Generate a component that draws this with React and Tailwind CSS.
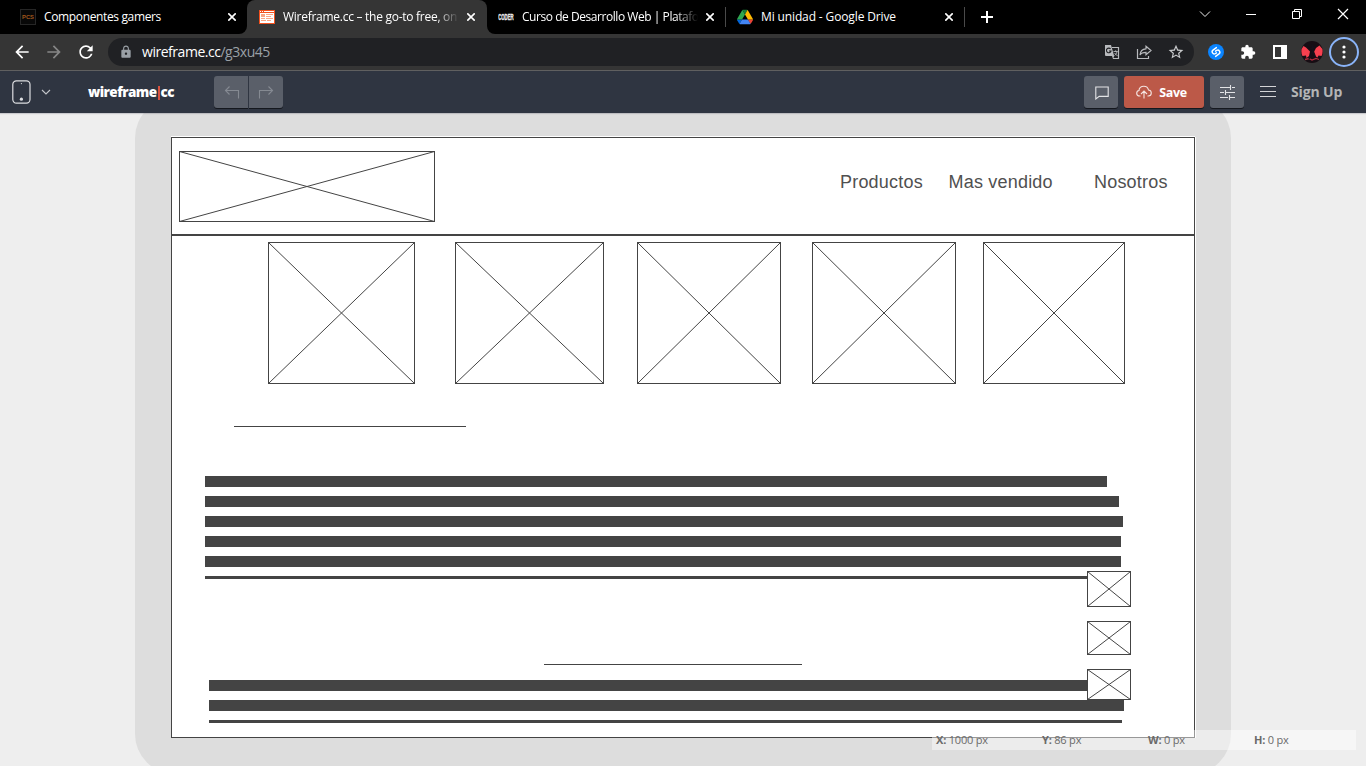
import React from "react";
import { MdStarBorder, MdExtension, MdLock, MdRefresh, MdArrowBack, MdArrowForward } from "react-icons/md";

const TEXT_FONT = "font-['Open_Sans','Noto_Sans',sans-serif]";

function Cross({ className = "" }) {
  return (
    <svg className={`h-2 w-2 shrink-0 ${className}`} viewBox="0 0 8 8" stroke="#fff" strokeWidth="1.6">
      <path d="M.3 .3 7.7 7.7M7.7 .3 .3 7.7" />
    </svg>
  );
}

function Tab({ icon, title, fade, spacing, className = "" }) {
  return (
    <div className={`flex h-[34px] w-[239px] shrink-0 items-center pl-3 ${className}`}>
      <div className="h-4 w-4 shrink-0">{icon}</div>
      <div
        className={`ml-2 w-[176px] overflow-hidden whitespace-nowrap text-[12px] leading-[18px] text-white ${spacing} ${
          fade ? "[mask-image:linear-gradient(to_right,#000_87%,transparent)]" : ""
        }`}
      >
        {title}
      </div>
      <Cross className="ml-2" />
    </div>
  );
}

const PcsIcon = () => (
  <svg viewBox="0 0 16 16" className="h-4 w-4">
    <rect x=".5" y=".5" width="15" height="15" fill="#080808" stroke="#262626" />
    <text x="8" y="10.2" textAnchor="middle" textLength="12" lengthAdjust="spacingAndGlyphs" fontSize="6" fontWeight="700" fontFamily="Liberation Sans, sans-serif" fill="#a0561c">PCS</text>
  </svg>
);

const WireIcon = () => (
  <svg viewBox="0 0 16 16" className="h-4 w-4" shapeRendering="crispEdges">
    <rect y="1" width="16" height="14" fill="#f4511e" />
    <path d="M1 2.5h1M3 2.5h1M5 2.5h10" stroke="#fff" />
    <rect x="1" y="4" width="14" height="10" fill="#fff" />
    <rect x="2" y="5" width="4" height="3" fill="#f9a585" />
    <path d="M7 5.5h7M7 7.5h5M2 9.5h4M7 9.5h7M2 11.5h5M8 11.5h4" stroke="#f9a585" />
  </svg>
);

const CoderIcon = () => (
  <svg viewBox="0 0 16 16" className="h-4 w-4">
    <text transform="scale(1 2)" x="0.2" y="5.5" textLength="15.4" lengthAdjust="spacingAndGlyphs" fontSize="4.6" fontWeight="700" fontFamily="Liberation Sans, sans-serif" fill="#e8e8e8" stroke="#e8e8e8" strokeWidth=".2">CODER</text>
  </svg>
);

const DriveIcon = () => (
  <svg viewBox="0 0 87.3 78" className="h-4 w-4">
    <path d="m6.6 66.85 3.85 6.65c.8 1.4 1.95 2.5 3.3 3.3l13.75-23.8h-27.5c0 1.55.4 3.1 1.2 4.5z" fill="#0066da" />
    <path d="m43.65 25-13.75-23.8c-1.35.8-2.5 1.9-3.3 3.3l-25.4 44a9.06 9.06 0 0 0-1.2 4.5h27.5z" fill="#2fa84f" />
    <path d="m73.55 76.8c1.35-.8 2.5-1.9 3.3-3.3l9.25-16c.8-1.4 1.2-2.95 1.2-4.5h-27.5l5.85 11.5z" fill="#ea4335" />
    <path d="m43.65 25 13.75-23.8c-1.35-.8-2.9-1.2-4.5-1.2h-18.5c-1.6 0-3.15.45-4.5 1.2z" fill="#188038" />
    <path d="m59.8 53h-32.3l-13.75 23.8c1.35.8 2.9 1.2 4.5 1.2h50.8c1.6 0 3.15-.45 4.5-1.2z" fill="#4285f4" />
    <path d="m73.4 26.5-12.7-22c-.8-1.4-1.95-2.5-3.3-3.3l-13.75 23.8 16.15 28h27.45c0-1.55-.4-3.1-1.2-4.5z" fill="#ffba00" />
  </svg>
);

function TabStrip() {
  return (
    <div className="flex h-[34px] bg-[#353535]">
      <div className="w-[247px] shrink-0 rounded-br-lg bg-black pl-2">
        <Tab icon={<PcsIcon />} title="Componentes gamers" spacing="tracking-[-0.36px]" />
      </div>
      <div className="w-60 shrink-0 bg-[linear-gradient(#000_50%,transparent_50%)]">
        <Tab icon={<WireIcon />} title="Wireframe.cc – the go-to free, on" fade spacing="tracking-[-0.27px]" className="w-[240px] rounded-t-lg bg-[#353535]" />
      </div>
      <div className="flex flex-1 items-center rounded-bl-lg bg-black">
        <Tab icon={<CoderIcon />} title="Curso de Desarrollo Web | Platafo" fade spacing="tracking-[-0.45px]" className="-ml-px" />
        <div className="h-5 w-px bg-[#4a4a4a]" />
        <Tab icon={<DriveIcon />} title="Mi unidad - Google Drive" spacing="tracking-[-0.13px]" className="-ml-px" />
        <div className="h-5 w-px bg-[#4a4a4a]" />
        <svg className="ml-4 h-3 w-3" viewBox="0 0 12 12" stroke="#fff" strokeWidth="2"><path d="M6 0v12M0 6h12" /></svg>
        <div className="mr-[17px] ml-auto flex items-center gap-[34px] self-start pt-2">
          <svg className="h-3 w-3" viewBox="0 0 12 12" fill="none" stroke="#eee"><path d="m1 3.5 5 5 5-5" /></svg>
          <svg className="h-3 w-3" viewBox="0 0 12 12" stroke="#fff"><path d="M1 6.5h10" /></svg>
          <svg className="h-3 w-3" viewBox="0 0 12 12" fill="none" stroke="#fff"><path d="M1.5 3.5h7v7h-7zM3.5 3.5v-2h7v7h-2" /></svg>
          <svg className="h-3 w-3" viewBox="0 0 12 12" fill="none" stroke="#fff" strokeWidth="1.2"><path d="m1 1 10 10M11 1 1 11" /></svg>
        </div>
      </div>
    </div>
  );
}

function AddressBar() {
  return (
    <div className="flex h-[37px] items-center border-b border-[#606060] bg-[#353535] pl-3">
      <MdArrowBack className="h-5 w-5 text-white" />
      <MdArrowForward className="ml-3 h-5 w-5 text-[#868686]" />
      <MdRefresh className="ml-3 h-5 w-5 text-white" />
      <div className="ml-3 flex h-7 w-[1086px] items-center rounded-full bg-[#202124] pr-[10px] pl-[11px]">
        <MdLock className="h-[14px] w-[14px] text-[#9aa0a6]" />
        <div className="ml-[9px] text-[14px] leading-5 tracking-[-0.47px] text-white">
          wireframe.cc<span className="text-[#9aa0a6]">/g3xu45</span>
        </div>
        <div className="ml-auto flex items-center gap-4">
          <svg className="h-4 w-4" viewBox="0 0 16 16" fill="none">
            <path d="M8 3.5h6.5v11H9" stroke="#b8babd" strokeWidth="1.2" />
            <path d="M1 1h6l3.2 11H2a1 1 0 0 1-1-1zM8 12h2.2L9 15z" fill="#b8babd" />
            <path d="M6.6 5A2.3 2.3 0 1 0 7 7H5" stroke="#202124" strokeWidth="1.1" />
            <path d="M9.5 7.5h4.2M11.7 6.3v1.2M13 7.5c-.4 2-1.2 3-2.5 4M10.5 9l3 3" stroke="#b8babd" strokeWidth=".9" />
          </svg>
          <svg className="h-4 w-4" viewBox="0 0 16 16" fill="none" stroke="#b8babd" strokeWidth="1.2">
            <path d="M1.5 5v9.5h11V12" />
            <path d="M10 2.2 15 6.5l-5 4.2V8.3C7 8.3 5.2 9 4 11c.3-3.7 2.4-6 6-6.2z" />
          </svg>
          <MdStarBorder className="h-4 w-4 scale-110 text-[#c8cacc]" />
        </div>
      </div>
      <svg className="ml-[14px] h-4 w-4" viewBox="0 0 16 16" fill="none">
        <circle cx="8" cy="8" r="8" fill="#0a84ff" />
        <path d="M8.4 3.6 5 6.1a2.1 2.1 0 0 0 2.3 3.5l1.2-.8M7.6 12.4l3.4-2.5a2.1 2.1 0 0 0-2.3-3.5l-1.2.8" stroke="#fff" strokeWidth="1.4" strokeLinecap="round" />
      </svg>
      <MdExtension className="ml-4 h-4 w-4 text-white" />
      <svg className="ml-4 h-4 w-4" viewBox="0 0 16 16"><path fill="#fff" fillRule="evenodd" d="M1 1h14v14H1zM3 3v10h6V3z" /></svg>
      <svg className="ml-[13px] h-[22px] w-[22px]" viewBox="0 0 22 22">
        <circle cx="11" cy="11" r="11" fill="#170d14" />
        <path d="M.6 8 2.5 5 5 6.5l4 4L8 15l-2.5 2L5 14.5l-3.5.5A11 11 0 0 1 .6 8zM21.4 8 18.5 4.5 15 7l-2 4 1 4 2.5 1.5 1-2 3 .5A11 11 0 0 0 21.4 8z" fill="#f8404f" />
        <path d="m4 18.5 4-1 3 1.5 4-1.5 3 1" fill="none" stroke="#b02c3e" strokeWidth="1.3" />
        <path d="M11 3.5 12 9l-1.5 4L8 18M12 10l2.5 6M9 8l5-2" fill="none" stroke="#15101a" strokeWidth="1.5" />
      </svg>
      <div className="ml-[6px] flex h-[30px] w-[30px] items-center justify-center rounded-full border-2 border-[#8ab4f8]">
        <svg className="h-[14px] w-1" viewBox="0 0 4 14" fill="#fff"><circle cx="2" cy="2" r="1.6" /><circle cx="2" cy="7" r="1.6" /><circle cx="2" cy="12" r="1.6" /></svg>
      </div>
    </div>
  );
}

function ToolButton({ className, children }) {
  return <div className={`flex h-8 items-center justify-center shadow-[0_1px_0_#15181e] ${className}`}>{children}</div>;
}

function AppToolbar() {
  return (
    <div className="relative z-10 flex h-[42px] items-center bg-[#2f3541] pl-3 shadow-[0_1px_1px_rgba(60,60,80,0.2)]">
      <svg className="h-6 w-[19px]" viewBox="0 0 19 24" fill="none" stroke="#dcdde0" strokeWidth="1.2">
        <rect x=".8" y=".8" width="17.2" height="22.4" rx="3.6" />
        <circle cx="9.4" cy="19.2" r="1.6" fill="#dcdde0" stroke="none" />
        <circle cx="9.4" cy="3.6" r=".6" fill="#dcdde0" stroke="none" />
      </svg>
      <svg className="ml-[10px] h-2 w-[10px]" viewBox="0 0 10 8" fill="none" stroke="#c3c5c9" strokeWidth="1.1"><path d="m1 2 4 4 4-4" /></svg>
      <div className="ml-[37px] w-[126px] whitespace-nowrap text-[13.5px] leading-5 font-extrabold tracking-[-0.55px] text-white">
        wireframe<span className="mx-[1px] inline-block h-[14px] w-[2px] bg-[#d8523f] align-[-3px]" />cc
      </div>
      <ToolButton className="w-[34px] rounded-l-[3px] bg-[#5a5f69]">
        <svg className="mt-px ml-px h-4 w-4" viewBox="0 0 16 16" fill="none" stroke="#858a92" strokeWidth="1.1"><path d="M5.5 1.5 1.5 5.5l4 4M1.5 5.5h13v8" /></svg>
      </ToolButton>
      <ToolButton className="ml-px w-[34px] rounded-r-[3px] bg-[#5a5f69]">
        <svg className="mt-px mr-px h-4 w-4" viewBox="0 0 16 16" fill="none" stroke="#858a92" strokeWidth="1.1"><path d="m10.5 1.5 4 4-4 4M14.5 5.5h-13v8" /></svg>
      </ToolButton>
      <div className="ml-auto flex items-center gap-[6px]">
        <ToolButton className="w-[34px] rounded-[3px] bg-[#5a5f69]">
          <svg className="mt-px ml-px h-[14px] w-[14px]" viewBox="0 0 14 14" fill="none" stroke="#e3e4e6" strokeWidth="1.1"><path d="M.8 1h12.4v9.4H4.2L.8 13z" /></svg>
        </ToolButton>
        <ToolButton className="w-20 rounded-[3px] bg-[#bc5948]">
          <svg className="-ml-[5px] h-4 w-4" viewBox="0 0 16 16" fill="none" stroke="#f4e4e1" strokeWidth="1.1">
            <path d="M4.5 12H3.8C1.8 12 .7 10.7.7 9.2c0-1.4 1-2.5 2.3-2.7C3 3.8 5 2.2 7.8 2.2c2.7 0 4.3 1.6 4.7 3.8 1.8.2 2.8 1.5 2.8 3s-1.2 3-3 3h-.8M8 14.5V7M5 10l3-3 3 3" />
          </svg>
          <span className="mt-px ml-[7px] text-[12.5px] leading-4 font-bold tracking-[-0.35px] text-white">Save</span>
        </ToolButton>
        <ToolButton className="w-[34px] rounded-[3px] bg-[#5a5f69]">
          <svg className="mt-px ml-px h-[15px] w-[15px]" viewBox="0 0 15 15" fill="none" stroke="#e3e4e6" strokeWidth="1.1"><path d="M0 2.5h10M12 2.5h3M10.5 0v5M0 7.5h4M6 7.5h9M5.5 5v5M0 12.5h8M10 12.5h5M9.5 10v5" /></svg>
        </ToolButton>
      </div>
      <svg className="ml-4 h-3 w-[16px]" viewBox="0 0 16 12" stroke="#d3d4d6" strokeWidth="1.2"><path d="M0 .5h16M0 5.5h16M0 10.5h16" /></svg>
      <div className="mr-[22px] ml-[15px] w-[53px] whitespace-nowrap text-[14px] leading-5 font-bold tracking-[-0.15px] text-[#b4b5b6]">Sign Up</div>
    </div>
  );
}

function Placeholder({ w, h, className = "" }) {
  return (
    <svg width={w} height={h} viewBox={`0 0 ${w} ${h}`} className={`shrink-0 ${className}`} stroke="#444">
      <rect x=".5" y=".5" width={w - 1} height={h - 1} fill="#fff" />
      <path d={`M.5 .5 ${w - 0.5} ${h - 0.5}M${w - 0.5} .5 .5 ${h - 0.5}`} />
    </svg>
  );
}

function Bars({ className, children }) {
  return <div className={`flex flex-col gap-[9px] ${className}`}>{children}</div>;
}

function Wireframe() {
  return (
    <div className="relative h-[601px] w-[1024px] border border-[#444] bg-white shadow-[0_-1px_0_#fff,1px_0_0_#fff]">
      <header className="flex h-[98px] border-b-2 border-[#444] pt-[13px] pl-[7px] font-['Liberation_Sans',sans-serif] text-[18px] leading-[26px] text-[#505050]">
        <Placeholder w={256} h={71} />
        <nav className="ml-[405px] flex pt-[18px] whitespace-nowrap">
          <span className="w-[108.5px] tracking-[0.2px]">Productos</span>
          <span className="w-[145.5px] tracking-[0.2px]">Mas vendido</span>
          <span className="tracking-[0.2px]">Nosotros</span>
        </nav>
      </header>
      <div className="mt-[6px] ml-[96px] flex">
        <Placeholder w={147} h={142} />
        <Placeholder w={149} h={142} className="ml-10" />
        <Placeholder w={144} h={142} className="ml-[33px]" />
        <Placeholder w={144} h={142} className="ml-[31px]" />
        <Placeholder w={142} h={142} className="ml-[27px]" />
      </div>
      <div className="mt-[42px] ml-[62px] h-px w-[232px] bg-[#444]" />
      <Bars className="mt-[49px] ml-[33px]">
        <div className="h-[11px] w-[902px] bg-[#444]" />
        <div className="h-[11px] w-[914px] bg-[#444]" />
        <div className="h-[11px] w-[918px] bg-[#444]" />
        <div className="h-[11px] w-[916px] bg-[#444]" />
        <div className="h-[11px] w-[916px] bg-[#444]" />
        <div className="h-[3px] w-[900px] bg-[#444]" />
      </Bars>
      <div className="mt-[85px] ml-[372px] h-px w-[258px] bg-[#444]" />
      <Bars className="mt-[15px] ml-[37px]">
        <div className="h-[11px] w-[900px] bg-[#444]" />
        <div className="h-[11px] w-[915px] bg-[#444]" />
        <div className="h-[3px] w-[913px] bg-[#444]" />
      </Bars>
      <div className="absolute top-[433px] left-[915px] flex flex-col">
        <Placeholder w={44} h={36} />
        <Placeholder w={44} h={34} className="mt-[14px]" />
        <Placeholder w={44} h={31} className="mt-[14px]" />
      </div>
    </div>
  );
}

function StatusBar() {
  const items = [["X:", "1000 px"], ["Y:", "86 px"], ["W:", "0 px"], ["H:", "0 px"]];
  return (
    <div className="absolute right-[10px] bottom-4 flex h-5 w-[424px] bg-white/45 text-[11px] leading-5 tracking-[-0.2px] text-[#6a6a6a]">
      {items.map(([label, value]) => (
        <div key={label} className="w-[106px] pl-1">
          <b>{label}</b> {value}
        </div>
      ))}
    </div>
  );
}

export default function App() {
  return (
    <div className={`flex h-[766px] w-[1366px] flex-col overflow-hidden bg-[#eee] ${TEXT_FONT}`}>
      <TabStrip />
      <AddressBar />
      <AppToolbar />
      <main className="relative flex-1 overflow-hidden bg-[#eee]">
        <div className="-mt-[15px] ml-[135px] flex h-[676px] w-[1096px] rounded-[40px] bg-[#ddd] pt-[39px] pl-9">
          <Wireframe />
        </div>
        <StatusBar />
      </main>
    </div>
  );
}
